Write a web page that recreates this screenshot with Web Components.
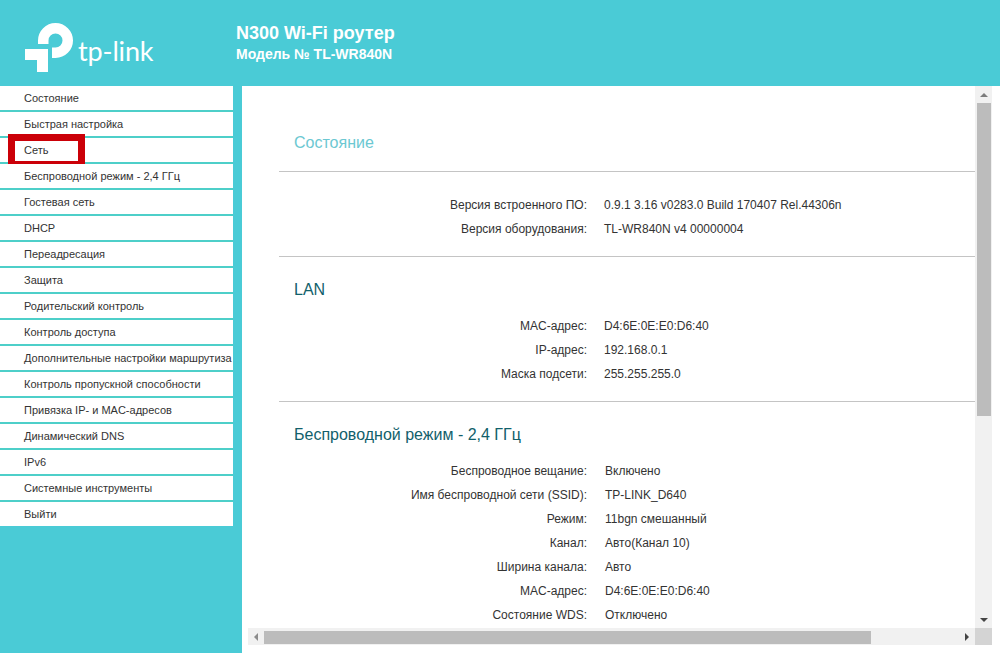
<!DOCTYPE html>
<html lang="ru">
<head>
<meta charset="utf-8">
<title>TL-WR840N</title>
<style>
  html, body { margin: 0; height: 100%; overflow: hidden; }
  body { background: #4acbd6; font-family: "Liberation Sans", Arial, sans-serif; }
</style>
</head>
<body>
<router-page>
  <router-header slot="header"></router-header>
  <side-menu slot="menu">
    <menu-item>Состояние</menu-item>
    <menu-item>Быстрая настройка</menu-item>
    <menu-item marked>Сеть</menu-item>
    <menu-item>Беспроводной режим - 2,4 ГГц</menu-item>
    <menu-item>Гостевая сеть</menu-item>
    <menu-item>DHCP</menu-item>
    <menu-item>Переадресация</menu-item>
    <menu-item>Защита</menu-item>
    <menu-item>Родительский контроль</menu-item>
    <menu-item>Контроль доступа</menu-item>
    <menu-item>Дополнительные настройки маршрутиза</menu-item>
    <menu-item>Контроль пропускной способности</menu-item>
    <menu-item>Привязка IP- и MAC-адресов</menu-item>
    <menu-item>Динамический DNS</menu-item>
    <menu-item>IPv6</menu-item>
    <menu-item>Системные инструменты</menu-item>
    <menu-item last>Выйти</menu-item>
  </side-menu>
  <scroll-pane slot="main">
    <status-section heading="Состояние" accent>
      <status-row label="Версия встроенного ПО:">0.9.1 3.16 v0283.0 Build 170407 Rel.44306n</status-row>
      <status-row label="Версия оборудования:">TL-WR840N v4 00000004</status-row>
    </status-section>
    <status-section heading="LAN">
      <status-row label="MAC-адрес:">D4:6E:0E:E0:D6:40</status-row>
      <status-row label="IP-адрес:">192.168.0.1</status-row>
      <status-row label="Маска подсети:">255.255.255.0</status-row>
    </status-section>
    <status-section heading="Беспроводной режим - 2,4 ГГц">
      <status-row shifted label="Беспроводное вещание:">Включено</status-row>
      <status-row shifted label="Имя беспроводной сети (SSID):">TP-LINK_D640</status-row>
      <status-row shifted label="Режим:">11bgn смешанный</status-row>
      <status-row shifted label="Канал:">Авто(Канал 10)</status-row>
      <status-row shifted label="Ширина канала:">Авто</status-row>
      <status-row shifted label="MAC-адрес:">D4:6E:0E:E0:D6:40</status-row>
      <status-row shifted label="Состояние WDS:">Отключено</status-row>
    </status-section>
  </scroll-pane>
</router-page>

<script>
// Page frame: header on top, menu on the left, main panel on the right
class RouterPage extends HTMLElement {
  constructor() {
    super();
    this.attachShadow({ mode: 'open' });
    this.shadowRoot.innerHTML = `
      <style>
        :host {
          display: grid;
          grid-template-columns: 233px 1fr;
          grid-template-rows: 86px 1fr;
          column-gap: 9px;
          width: 1000px;
          height: 653px;
          overflow: hidden;
        }
        .top { grid-column: 1 / 3; }
      </style>
      <div class="top"><slot name="header"></slot></div>
      <div><slot name="menu"></slot></div>
      <slot name="main"></slot>
    `;
  }
}

class RouterHeader extends HTMLElement {
  constructor() {
    super();
    this.attachShadow({ mode: 'open' });
    this.shadowRoot.innerHTML = `
      <style>
        :host {
          display: flex;
          height: 86px;
          color: #fff;
          font-family: "Liberation Sans", Arial, sans-serif;
        }
        .logo { display: flex; width: 236px; flex: none; }
        svg { display: block; width: 78px; height: 86px; flex: none; }
        .word {
          font-family: Lato, "Liberation Sans", sans-serif;
          font-size: 27px;
          font-weight: 400;
          letter-spacing: -.15px;
          line-height: 30px;
          margin: 36px 0 0 0;
        }
        .titles { padding-top: 22px; font-weight: bold; }
        .name { font-size: 18px; line-height: 22px; }
        .model { font-size: 14px; line-height: 20px; }
      </style>
      <div class="logo">
        <svg viewBox="0 0 78 86" aria-hidden="true">
          <g fill="none" stroke="#fff">
            <path stroke-width="10.500" d="M43.250 44V40.500A12.250 12.250 0 1 1 55.500 52.750H52"/>
            <path stroke-width="11" d="M25 54.500H42.500V72"/>
          </g>
        </svg>
        <span class="word">tp-link</span>
      </div>
      <div class="titles">
        <div class="name">N300 Wi-Fi роутер</div>
        <div class="model">Модель № TL-WR840N</div>
      </div>
    `;
  }
}

class SideMenu extends HTMLElement {
  constructor() {
    super();
    this.attachShadow({ mode: 'open' });
    this.shadowRoot.innerHTML = `
      <style>
        :host { display: block; width: 233px; background: #fff; position: relative; }
      </style>
      <slot></slot>
    `;
  }
}

class MenuItem extends HTMLElement {
  constructor() {
    super();
    this.attachShadow({ mode: 'open' });
    this.shadowRoot.innerHTML = `
      <style>
        :host {
          display: block;
          position: relative;
          height: 24px;
          line-height: 24px;
          padding-left: 24px;
          border-bottom: 2px solid #4dcfc9;
          background: #fff;
          color: #333;
          font-size: 11px;
          white-space: nowrap;
          overflow: hidden;
        }
        :host([last]) { border-bottom: 0; }
        :host([marked]) { overflow: visible; }
        /* red annotation painted over the screenshot */
        .mark {
          display: none;
          position: absolute;
          left: 8px;
          top: -4px;
          width: 63px;
          height: 20px;
          border: 7px solid #cb0008;
        }
        :host([marked]) .mark { display: block; }
      </style>
      <slot></slot><div class="mark"></div>
    `;
  }
}

// Main panel with drawn scrollbars, as the router's iframe shows them
class ScrollPane extends HTMLElement {
  constructor() {
    super();
    this.attachShadow({ mode: 'open' });
    this.shadowRoot.innerHTML = `
      <style>
        :host {
          display: grid;
          grid-template-columns: 6px 1fr 17px 8px;
          grid-template-rows: 542px 17px 1fr;
          background: #fff;
          height: 567px;
        }
        .view { grid-column: 1 / 3; overflow: hidden; padding: 0 0 0 37px; }
        .track { background: #f1f1f1; display: flex; }
        .v { grid-column: 3; grid-row: 1; flex-direction: column; align-items: center; }
        .h { grid-column: 2; grid-row: 2; align-items: center; }
        .corner { grid-column: 3; grid-row: 2; background: #d4d4d4; }
        .btn { flex: none; display: flex; align-items: center; justify-content: center; }
        .v .btn { width: 17px; height: 17px; }
        .h .btn { width: 16px; height: 17px; }
        .thumb { background: #bcbcbc; flex: none; }
        .v .thumb { width: 14px; height: 313px; }
        .h .thumb { height: 13px; width: 607px; margin-top: 1px; }
        .fill { flex: 1; }
        i { display: block; width: 0; height: 0; border: 4px solid transparent; }
        .up i { border-top: 0; border-bottom-color: #7c7c7c; }
        .down i { border-bottom: 0; border-top-color: #444; }
        .left i { border-left: 0; border-right-color: #8c8c8c; }
        .right i { border-right: 0; border-left-color: #444; }
      </style>
      <div class="view"><slot></slot></div>
      <div class="track v">
        <div class="btn up"><i></i></div>
        <div class="thumb"></div>
        <div class="fill"></div>
        <div class="btn down"><i></i></div>
      </div>
      <div class="track h">
        <div class="btn left"><i></i></div>
        <div class="thumb"></div>
        <div class="fill"></div>
        <div class="btn right"><i></i></div>
      </div>
      <div class="corner"></div>
    `;
  }
}

class StatusSection extends HTMLElement {
  constructor() {
    super();
    this.attachShadow({ mode: 'open' });
    this.shadowRoot.innerHTML = `
      <style>
        :host { display: block; }
        h2 {
          margin: 0;
          padding: 0 0 0 15px;
          font-size: 16px;
          font-weight: normal;
          line-height: 24px;
          color: #125f6b;
        }
        :host([accent]) h2 { color: #6cc8d2; }
        .head { padding-top: 21px; height: 36px; border-top: 1px solid #c4c4c4; }
        :host([accent]) .head { padding-top: 45px; height: 40px; border-top: 0; }
        .rows { padding: 0 0 15px; }
        :host([accent]) .rows { padding-top: 21px; border-top: 1px solid #c4c4c4; }
      </style>
      <div class="head"><h2></h2></div>
      <div class="rows"><slot></slot></div>
    `;
    this.shadowRoot.querySelector('h2').textContent = this.getAttribute('heading');
  }
}

class StatusRow extends HTMLElement {
  constructor() {
    super();
    this.attachShadow({ mode: 'open' });
    this.shadowRoot.innerHTML = `
      <style>
        :host {
          display: grid;
          grid-template-columns: 308px 1fr;
          column-gap: 17px;
          height: 24px;
          line-height: 24px;
          font-size: 12px;
          color: #333;
          white-space: nowrap;
        }
        :host([shifted]) { column-gap: 18px; }
        .label { text-align: right; }
      </style>
      <div class="label"></div>
      <div><slot></slot></div>
    `;
    this.shadowRoot.querySelector('.label').textContent = this.getAttribute('label');
  }
}

customElements.define('router-page', RouterPage);
customElements.define('router-header', RouterHeader);
customElements.define('side-menu', SideMenu);
customElements.define('menu-item', MenuItem);
customElements.define('scroll-pane', ScrollPane);
customElements.define('status-section', StatusSection);
customElements.define('status-row', StatusRow);
</script>
</body>
</html>
